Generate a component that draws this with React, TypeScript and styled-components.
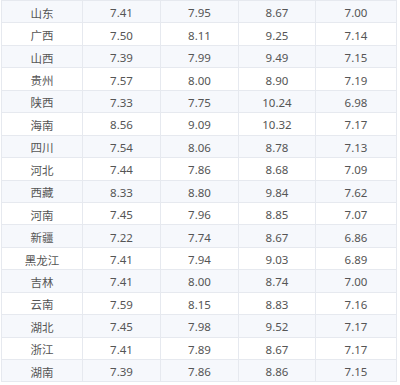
import React from "react";
import styled, { createGlobalStyle } from "styled-components";

const Global = createGlobalStyle`
  html, body { margin: 0; padding: 0; background: #ffffff; }
  body { width: 400px; height: 385px; overflow: hidden; }
`;

const Table = styled.div`
  margin: 0 0 0 1px;
  width: 396px;
  display: grid;
  grid-template-columns: 81px 78px 78px 77px 81px;
  grid-auto-rows: 22.44px;
  border-top: 1px solid #e6e9ef;
  border-left: 1px solid #e6e9ef;
  box-sizing: border-box;
  font-family: "Noto Sans", "Noto Sans CJK SC", sans-serif;
  font-size: 11.5px;
  color: #555555;
`;

const Cell = styled.div<{ $striped: boolean }>`
  display: flex;
  align-items: center;
  justify-content: center;
  padding-top: 2px;
  box-sizing: border-box;
  border-right: 1px solid #e6e9ef;
  border-bottom: 1px solid #e6e9ef;
  background: ${(p) => (p.$striped ? "#f6f8fc" : "#ffffff")};
`;

const rows: string[][] = [
  ["山东", "7.41", "7.95", "8.67", "7.00"],
  ["广西", "7.50", "8.11", "9.25", "7.14"],
  ["山西", "7.39", "7.99", "9.49", "7.15"],
  ["贵州", "7.57", "8.00", "8.90", "7.19"],
  ["陕西", "7.33", "7.75", "10.24", "6.98"],
  ["海南", "8.56", "9.09", "10.32", "7.17"],
  ["四川", "7.54", "8.06", "8.78", "7.13"],
  ["河北", "7.44", "7.86", "8.68", "7.09"],
  ["西藏", "8.33", "8.80", "9.84", "7.62"],
  ["河南", "7.45", "7.96", "8.85", "7.07"],
  ["新疆", "7.22", "7.74", "8.67", "6.86"],
  ["黑龙江", "7.41", "7.94", "9.03", "6.89"],
  ["吉林", "7.41", "8.00", "8.74", "7.00"],
  ["云南", "7.59", "8.15", "8.83", "7.16"],
  ["湖北", "7.45", "7.98", "9.52", "7.17"],
  ["浙江", "7.41", "7.89", "8.67", "7.17"],
  ["湖南", "7.39", "7.86", "8.86", "7.15"],
];

export default function App() {
  return (
    <>
      <Global />
      <Table>
        {rows.map((r, i) =>
          r.map((c, j) => (
            <Cell key={`${i}-${j}`} $striped={i % 2 === 0}>
              {c}
            </Cell>
          ))
        )}
      </Table>
    </>
  );
}
